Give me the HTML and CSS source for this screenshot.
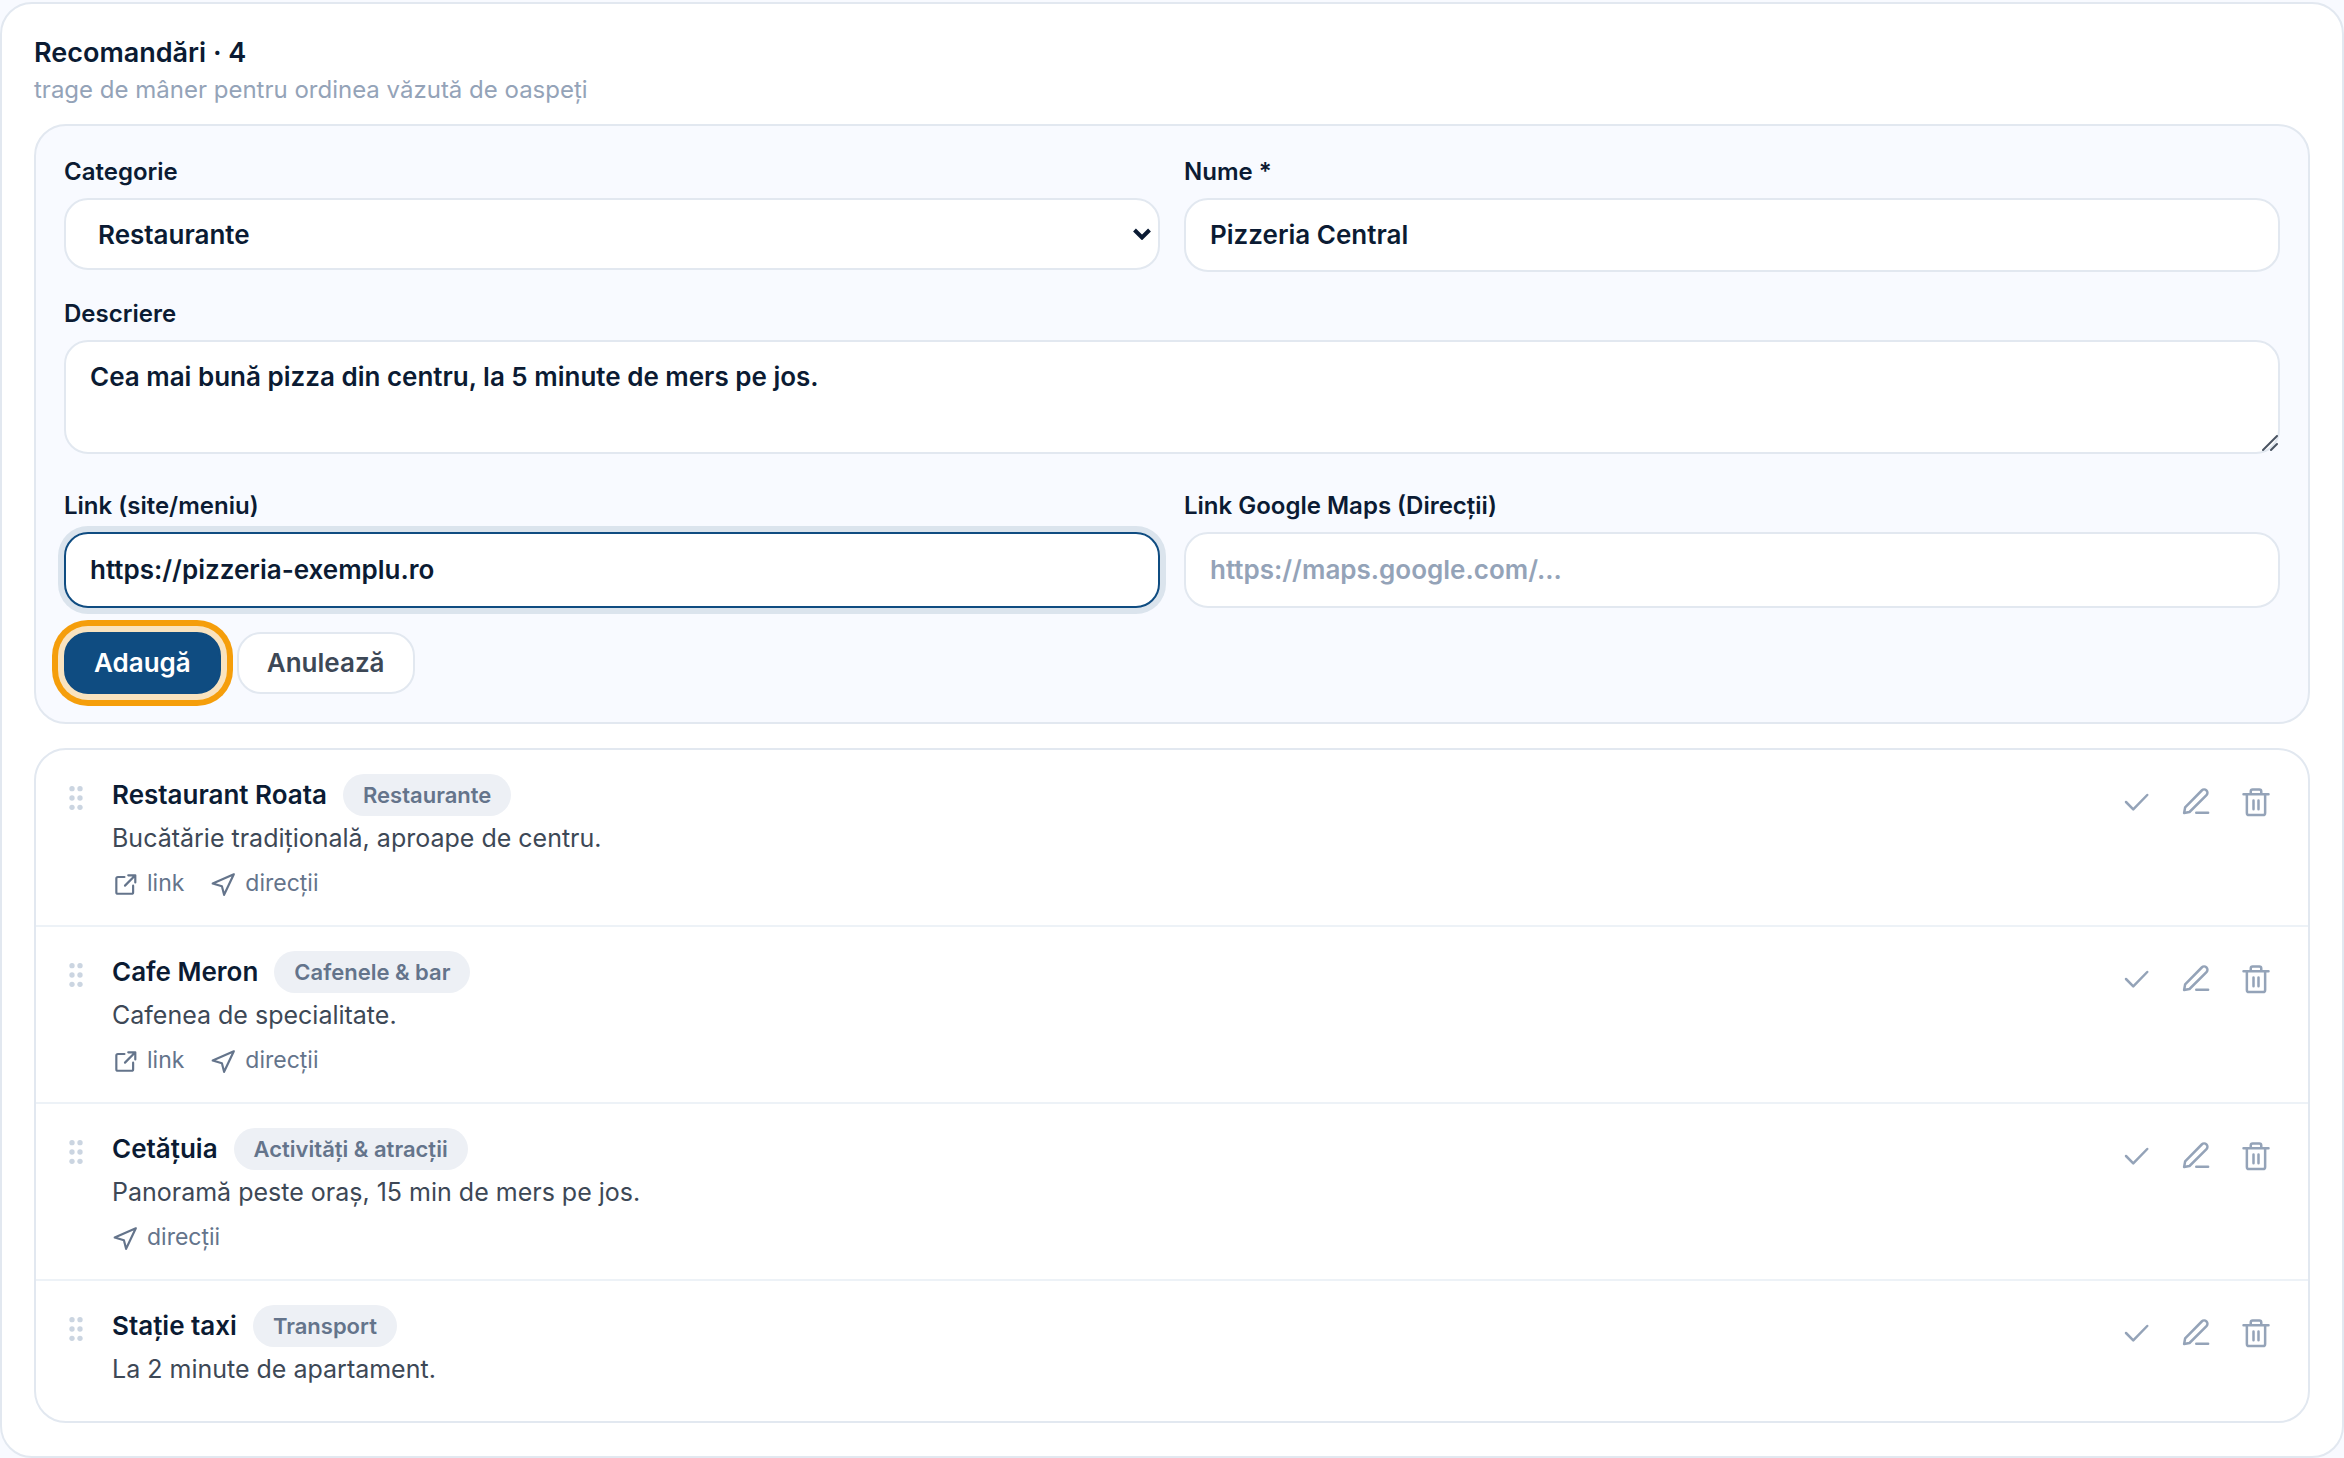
FILE: index.html
```html
<!DOCTYPE html>
<html lang="ro">
<head>
    <meta charset="UTF-8">
    <meta name="viewport" content="width=device-width, initial-scale=1.0">
    <title>Recomandări</title>
    <link rel="stylesheet" href="styles.css">
</head>
<body>
    <!-- Iconițe refolosite în listă -->
    <svg class="sprite" aria-hidden="true">
        <symbol id="i-grip" viewBox="0 0 24 24">
            <g fill="currentColor">
                <circle cx="9" cy="5" r="2"/><circle cx="9" cy="12" r="2"/><circle cx="9" cy="19" r="2"/>
                <circle cx="15" cy="5" r="2"/><circle cx="15" cy="12" r="2"/><circle cx="15" cy="19" r="2"/>
            </g>
        </symbol>
        <symbol id="i-link" viewBox="0 0 24 24">
            <path d="M11.5 5.500H5.500a1.500 1.500 0 0 0-1.500 1.500v12.500A1.500 1.500 0 0 0 5.500 21h12.500a1.500 1.500 0 0 0 1.500-1.500v-6M12 13.500 21.500 4M15 4h6.500v6.500"/>
        </symbol>
        <symbol id="i-nav" viewBox="0 0 24 24">
            <path d="M22 3 2.500 11.500l8.500 2.500 2 8z"/>
        </symbol>
        <symbol id="i-check" viewBox="0 0 24 24">
            <path d="M4 12l5.800 5.900L21 6.400"/>
        </symbol>
        <symbol id="i-pencil" viewBox="0 0 24 24">
            <path d="M12.200 20.600h9.500M2.500 20.800l.8-4.500L16.600 2.800a2.500 2.500 0 0 1 3.800 3.700L6.800 20z"/>
        </symbol>
        <symbol id="i-trash" viewBox="0 0 24 24">
            <path d="M2 5.700h20M4.700 5.700v15a1.700 1.700 0 0 0 1.700 1.700h11.200a1.700 1.700 0 0 0 1.700-1.700v-15M7.800 5.700V3.500A1.500 1.500 0 0 1 9.300 2h5.400a1.500 1.500 0 0 1 1.500 1.500v2.200M10 10.700v7M14 10.700v7"/>
        </symbol>
    </svg>

    <main class="card">
        <header class="card-header">
            <h1>Recomandări · 4</h1>
            <p>trage de mâner pentru ordinea văzută de oaspeți</p>
        </header>

        <!-- Formular de adăugare -->
        <form class="panel">
            <div class="fields">
                <div class="field">
                    <label for="category">Categorie</label>
                    <div class="select-wrap">
                        <select id="category">
                            <option>Restaurante</option>
                            <option>Cafenele &amp; bar</option>
                            <option>Activități &amp; atracții</option>
                            <option>Transport</option>
                        </select>
                        <svg class="chevron" viewBox="0 0 18 12" aria-hidden="true"><path d="M1.500 2 9 9.500 16.500 2"/></svg>
                    </div>
                </div>
                <div class="field">
                    <label for="name">Nume *</label>
                    <input type="text" id="name" value="Pizzeria Central">
                </div>
                <div class="field field-wide">
                    <label for="description">Descriere</label>
                    <textarea id="description" rows="2">Cea mai bună pizza din centru, la 5 minute de mers pe jos.</textarea>
                    <svg class="resize" viewBox="0 0 16 16" aria-hidden="true"><path d="M1 15 15 1M9 15l6-6"/></svg>
                </div>
                <div class="field">
                    <label for="site">Link (site/meniu)</label>
                    <input type="url" id="site" class="active" value="https://pizzeria-exemplu.ro">
                </div>
                <div class="field">
                    <label for="maps">Link Google Maps (Direcții)</label>
                    <input type="url" id="maps" placeholder="https://maps.google.com/...">
                </div>
            </div>
            <div class="buttons">
                <button type="button" class="btn btn-primary">Adaugă</button>
                <button type="button" class="btn">Anulează</button>
            </div>
        </form>

        <!-- Lista recomandărilor -->
        <ul class="list">
            <li class="item">
                <button type="button" class="grip" aria-label="Mută"><svg><use href="#i-grip"/></svg></button>
                <div class="info">
                    <div class="title"><h2>Restaurant Roata</h2><span class="tag">Restaurante</span></div>
                    <p>Bucătărie tradițională, aproape de centru.</p>
                    <div class="links">
                        <a href="#"><svg><use href="#i-link"/></svg>link</a>
                        <a href="#"><svg><use href="#i-nav"/></svg>direcții</a>
                    </div>
                </div>
                <div class="actions">
                    <button type="button" aria-label="Activează"><svg><use href="#i-check"/></svg></button>
                    <button type="button" aria-label="Editează"><svg><use href="#i-pencil"/></svg></button>
                    <button type="button" aria-label="Șterge"><svg><use href="#i-trash"/></svg></button>
                </div>
            </li>
            <li class="item">
                <button type="button" class="grip" aria-label="Mută"><svg><use href="#i-grip"/></svg></button>
                <div class="info">
                    <div class="title"><h2>Cafe Meron</h2><span class="tag">Cafenele &amp; bar</span></div>
                    <p>Cafenea de specialitate.</p>
                    <div class="links">
                        <a href="#"><svg><use href="#i-link"/></svg>link</a>
                        <a href="#"><svg><use href="#i-nav"/></svg>direcții</a>
                    </div>
                </div>
                <div class="actions">
                    <button type="button" aria-label="Activează"><svg><use href="#i-check"/></svg></button>
                    <button type="button" aria-label="Editează"><svg><use href="#i-pencil"/></svg></button>
                    <button type="button" aria-label="Șterge"><svg><use href="#i-trash"/></svg></button>
                </div>
            </li>
            <li class="item">
                <button type="button" class="grip" aria-label="Mută"><svg><use href="#i-grip"/></svg></button>
                <div class="info">
                    <div class="title"><h2>Cetățuia</h2><span class="tag">Activități &amp; atracții</span></div>
                    <p>Panoramă peste oraș, 15 min de mers pe jos.</p>
                    <div class="links">
                        <a href="#"><svg><use href="#i-nav"/></svg>direcții</a>
                    </div>
                </div>
                <div class="actions">
                    <button type="button" aria-label="Activează"><svg><use href="#i-check"/></svg></button>
                    <button type="button" aria-label="Editează"><svg><use href="#i-pencil"/></svg></button>
                    <button type="button" aria-label="Șterge"><svg><use href="#i-trash"/></svg></button>
                </div>
            </li>
            <li class="item">
                <button type="button" class="grip" aria-label="Mută"><svg><use href="#i-grip"/></svg></button>
                <div class="info">
                    <div class="title"><h2>Stație taxi</h2><span class="tag">Transport</span></div>
                    <p>La 2 minute de apartament.</p>
                    <div class="links"></div>
                </div>
                <div class="actions">
                    <button type="button" aria-label="Activează"><svg><use href="#i-check"/></svg></button>
                    <button type="button" aria-label="Editează"><svg><use href="#i-pencil"/></svg></button>
                    <button type="button" aria-label="Șterge"><svg><use href="#i-trash"/></svg></button>
                </div>
            </li>
        </ul>
    </main>
</body>
</html>
```

FILE: styles.css
```css
* {
    box-sizing: border-box;
}
body {
    margin: 0;
    padding-top: 2px;
    min-height: 100vh;
    display: flex;
    flex-direction: column;
    font-family: Inter, "Liberation Sans", sans-serif;
    font-size: 26px;
    color: #0b1b33;
    background-color: #f8faff;
}
h1, h2, p, ul {
    margin: 0;
    padding: 0;
}
svg {
    display: block;
    fill: none;
    stroke: currentColor;
    stroke-width: 2;
    stroke-linecap: round;
    stroke-linejoin: round;
}
.sprite {
    display: none;
}
.card {
    flex: 1;
    padding: 32px;
    background-color: #fff;
    border: 2px solid #e2e8f0;
    border-radius: 32px;
}
.card-header {
    margin-bottom: 14px;
}
h1 {
    font-size: 27px;
    line-height: 34px;
    font-weight: 600;
}
.card-header p {
    font-size: 24px;
    line-height: 40px;
    color: #94a3b8;
}

/* Formular */
.panel {
    padding: 28px;
    background-color: #f8faff;
    border: 2px solid #e2e8f0;
    border-radius: 32px;
}
.fields {
    display: grid;
    grid-template-columns: 1fr 1fr;
    gap: 24px;
    align-items: start;
}
.field-wide {
    grid-column: 1 / -1;
    position: relative;
    padding-bottom: 10px;
}
label {
    display: block;
    margin-bottom: 8px;
    font-size: 24px;
    line-height: 36px;
    font-weight: 600;
}
input, select, textarea {
    display: block;
    width: 100%;
    height: 76px;
    padding: 0 24px 2px;
    font: 600 26px/38px Inter, "Liberation Sans", sans-serif;
    color: inherit;
    background-color: #fff;
    border: 2px solid #e2e8f0;
    border-radius: 24px;
    outline: none;
}
#name {
    height: 74px;
}
select {
    height: 72px;
    padding: 2px 32px 0;
    appearance: none;
}
textarea {
    height: 114px;
    padding: 16px 24px;
    resize: none;
}
input::placeholder {
    color: #94a3b8;
    opacity: 1;
}
.active {
    border-color: #0f4c81;
    box-shadow: 0 0 0 6px #dbe4ed;
}
.select-wrap {
    position: relative;
}
.chevron {
    position: absolute;
    right: 9px;
    top: 30px;
    width: 18px;
    height: 12px;
    stroke-width: 4;
    stroke-linecap: butt;
    stroke-linejoin: miter;
}
.resize {
    position: absolute;
    right: 2px;
    bottom: 13px;
    width: 16px;
    height: 16px;
    color: #4b5563;
}
.buttons {
    display: flex;
    gap: 16px;
    margin-top: 24px;
}
.btn {
    height: 62px;
    padding: 0 28px;
    font: 600 26px/36px Inter, "Liberation Sans", sans-serif;
    color: #3d4856;
    background-color: #fff;
    border: 2px solid #e2e8f0;
    border-radius: 24px;
    cursor: pointer;
}
.btn-primary {
    color: #fff;
    background-color: #0f4c81;
    border-color: #0f4c81;
    box-shadow: 0 0 0 6px #f9e3bf, 0 0 0 12px #f59e0b;
}

/* Lista */
.list {
    margin-top: 24px;
    list-style: none;
    border: 2px solid #e2e8f0;
    border-radius: 32px;
}
.item {
    display: flex;
    gap: 20px;
    padding: 24px;
    border-bottom: 2px solid #edf2f7;
}
.item:last-child {
    border-bottom: none;
}
.grip, .actions button {
    padding: 0;
    border: none;
    background: none;
    cursor: pointer;
}
.grip {
    align-self: flex-start;
    margin-top: 8px;
    color: #cbd5e1;
}
.grip svg {
    width: 32px;
    height: 32px;
    stroke: none;
}
.info {
    flex: 1;
}
.title {
    display: flex;
    align-items: center;
    gap: 16px;
    margin-bottom: 2px;
}
h2 {
    font-size: 26px;
    line-height: 42px;
    font-weight: 600;
}
.tag {
    padding: 0 20px;
    font-size: 22px;
    line-height: 42px;
    font-weight: 600;
    color: #64748b;
    background-color: #edf0f5;
    border-radius: 21px;
}
.info p {
    font-size: 25px;
    line-height: 40px;
    color: #3d4856;
}
.links {
    display: flex;
    gap: 26px;
    margin-top: 8px;
}
.links a {
    display: flex;
    align-items: center;
    gap: 9px;
    font-size: 23px;
    line-height: 35px;
    color: #64748b;
    text-decoration: none;
}
.links svg {
    width: 26px;
    height: 26px;
}
.actions {
    display: flex;
    align-self: flex-start;
    gap: 4px;
}
.actions button {
    width: 56px;
    height: 56px;
    display: grid;
    place-items: center;
    color: #94a3b8;
}
.actions svg {
    width: 30px;
    height: 30px;
}
```
